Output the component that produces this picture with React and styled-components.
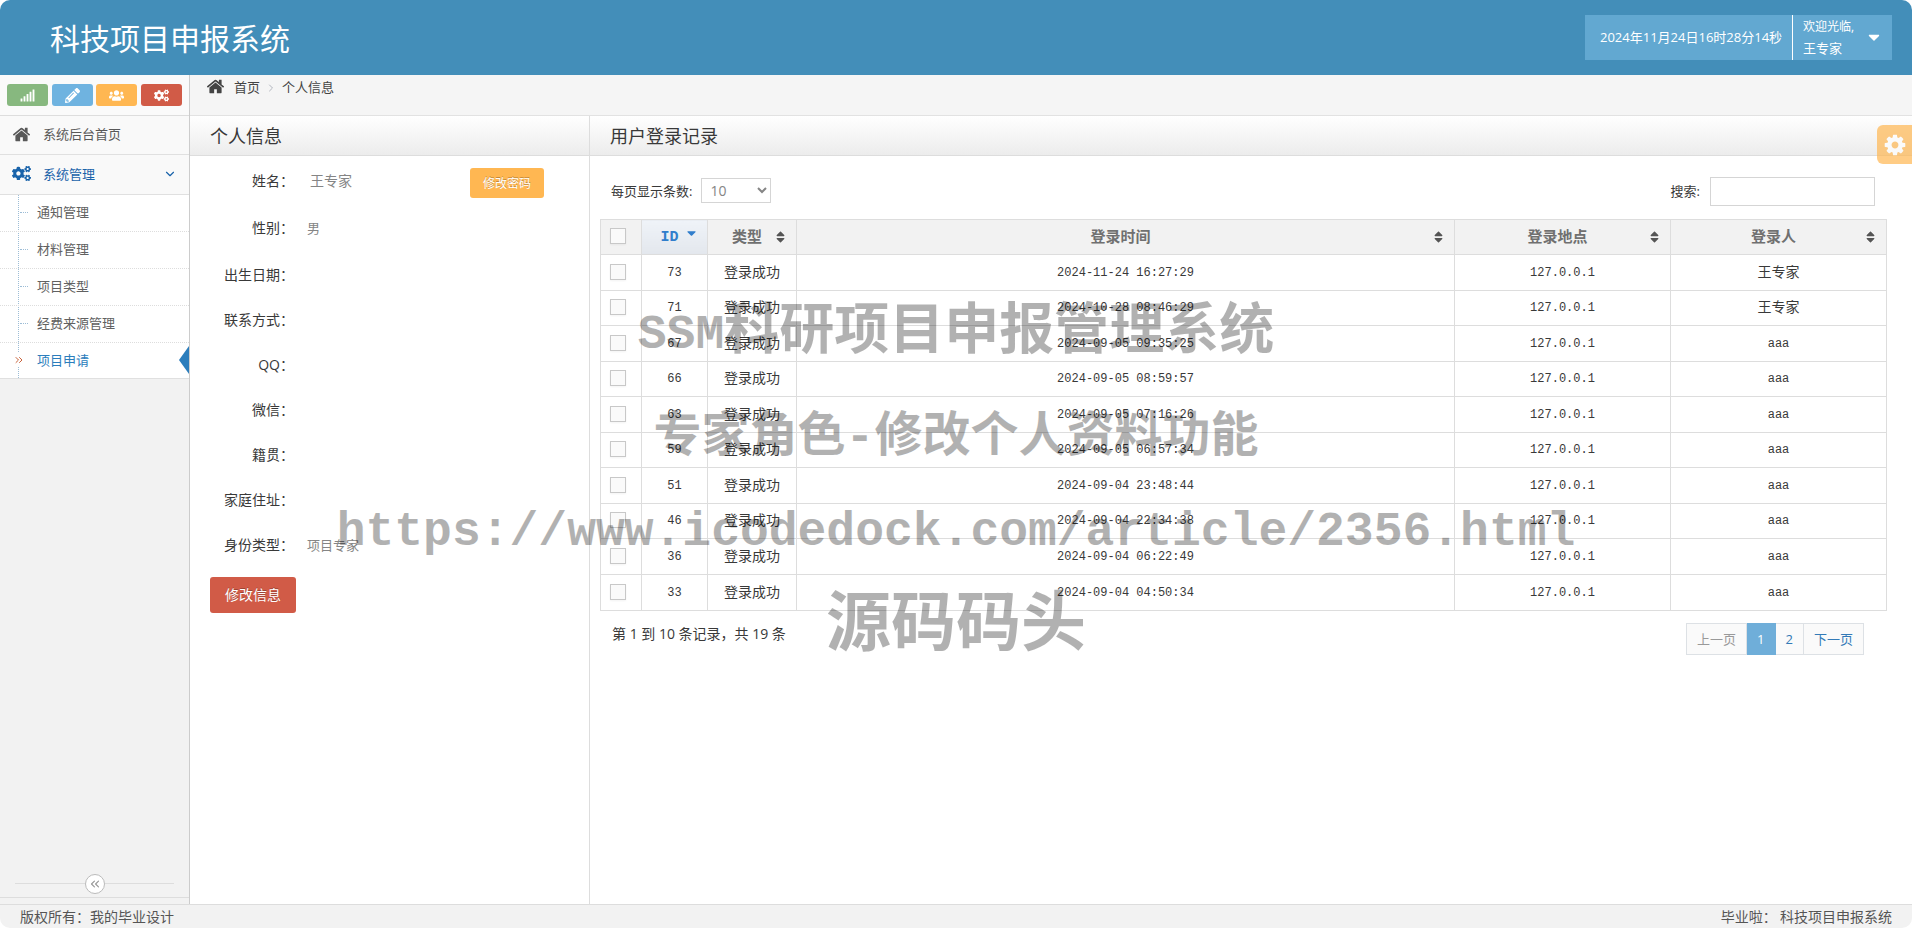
import styled, { createGlobalStyle } from "styled-components";
import { ChevronDown, ChevronRight, ChevronsLeft, ChevronsRight } from "lucide-react";
import { FaSignal, FaPencilAlt, FaUsers, FaCogs, FaCaretDown, FaSort } from "react-icons/fa";

const shortcuts = [
  { color: "#87b87f", icon: <FaSignal />, name: "统计" },
  { color: "#6fb3e0", icon: <FaPencilAlt />, name: "编辑" },
  { color: "#ffb752", icon: <FaUsers />, name: "用户" },
  { color: "#d15b47", icon: <FaCogs />, name: "设置" },
];

const submenu = ["通知管理", "材料管理", "项目类型", "经费来源管理", "项目申请"];

const fields = [
  { label: "姓名", value: "王专家", big: true, gap: true },
  { label: "性别", value: "男", gap: true },
  { label: "出生日期" },
  { label: "联系方式" },
  { label: "QQ" },
  { label: "微信" },
  { label: "籍贯" },
  { label: "家庭住址" },
  { label: "身份类型", value: "项目专家" },
];

const columns = [
  { title: "类型", width: "89px" },
  { title: "登录时间", width: "auto" },
  { title: "登录地点", width: "216px" },
  { title: "登录人", width: "216px" },
];

const records = [
  [73, "2024-11-24 16:27:29", "王专家"],
  [71, "2024-10-28 08:46:29", "王专家"],
  [67, "2024-09-05 09:35:25", "aaa"],
  [66, "2024-09-05 08:59:57", "aaa"],
  [63, "2024-09-05 07:16:26", "aaa"],
  [59, "2024-09-05 06:57:34", "aaa"],
  [51, "2024-09-04 23:48:44", "aaa"],
  [46, "2024-09-04 22:34:38", "aaa"],
  [36, "2024-09-04 06:22:49", "aaa"],
  [33, "2024-09-04 04:50:34", "aaa"],
];

function HomeIcon() {
  return (
    <svg viewBox="0 0 1792 1792" width="1em" height="1em" fill="currentColor" aria-hidden="true">
      <path d="M1472 992v480q0 26-19 45t-45 19h-384v-384h-256v384h-384q-26 0-45-19t-19-45v-480q0-1 .5-3t.5-3l575-474 575 474q1 2 1 6zm223-69l-62 74q-8 9-21 11h-3q-13 0-21-7l-692-577-692 577q-12 8-24 7-13-2-21-11l-62-74q-8-10-7-23.5t11-21.5l719-599q32-26 76-26t76 26l244 204v-195q0-14 9-23t23-9h192q14 0 23 9t9 23v408l219 182q10 8 11 21.5t-7 23.5z" />
    </svg>
  );
}

function GearIcon() {
  return (
    <svg viewBox="0 0 1792 1792" width="1em" height="1em" fill="currentColor" aria-hidden="true">
      <path d="M1152 896q0-106-75-181t-181-75-181 75-75 181 75 181 181 75 181-75 75-181zm512-109v222q0 12-8 23t-20 13l-185 28q-19 54-39 91 35 50 107 138 10 12 10 25t-9 23q-27 37-99 108t-94 71q-12 0-26-9l-138-108q-44 23-91 38-16 136-29 186-7 28-36 28h-222q-14 0-24.5-8.5t-11.5-21.5l-28-184q-49-16-90-37l-141 107q-10 9-25 9-14 0-25-11-126-114-165-168-7-10-7-23 0-12 8-23 15-21 51-66.5t54-70.5q-27-50-41-99l-183-27q-13-2-21-12.5t-8-23.5v-222q0-12 8-23t19-13l186-28q14-46 39-92-40-57-107-138-10-12-10-24 0-10 9-23 26-36 98.5-107.5t94.5-71.5q13 0 26 10l138 107q44-23 91-38 16-136 29-186 7-28 36-28h222q14 0 24.5 8.5t11.5 21.5l28 184q49 16 90 37l142-107q9-9 24-9 13 0 25 10 129 119 165 170 7 8 7 22 0 12-8 23-15 21-51 66.5t-54 70.5q26 50 41 98l183 28q13 2 21 12.5t8 23.5z" />
    </svg>
  );
}

function Sidebar() {
  return (
    <Side>
      <Shortcuts>
        {shortcuts.map((s) => (
          <Shortcut key={s.name} color={s.color} aria-label={s.name}>
            {s.icon}
          </Shortcut>
        ))}
      </Shortcuts>
      <MenuLink href="#home">
        <MenuIcon><HomeIcon /></MenuIcon>
        <span>系统后台首页</span>
      </MenuLink>
      <MenuLink href="#system" $open>
        <MenuIcon><FaCogs /></MenuIcon>
        <span>系统管理</span>
        <ChevronDown />
      </MenuLink>
      <Submenu>
        {submenu.map((name) => {
          const active = name === "项目申请";
          return (
            <SubItem key={name}>
              <SubLink href={"#" + name} $active={active}>
                {active ? <ChevronsRight /> : <Tick />}
                {name}
              </SubLink>
              {active && <ActiveArrow />}
            </SubItem>
          );
        })}
      </Submenu>
      <Collapse>
        <CollapseLine />
        <CollapseButton aria-label="收起">
          <ChevronsLeft size={14} />
        </CollapseButton>
        <CollapseLine />
      </Collapse>
    </Side>
  );
}

function Profile() {
  return (
    <ProfilePanel>
      <PanelTitle>个人信息</PanelTitle>
      <Fields>
        {fields.map((f) => (
          <Field key={f.label} $gap={f.gap}>
            <dt>{f.label}：</dt>
            <FieldValue $big={f.big}>{f.value}</FieldValue>
            {f.big && <PasswordButton>修改密码</PasswordButton>}
          </Field>
        ))}
      </Fields>
      <EditButton>修改信息</EditButton>
    </ProfilePanel>
  );
}

function LoginRecords() {
  return (
    <RecordPanel>
      <PanelTitle>用户登录记录</PanelTitle>
      <Tools>
        <label htmlFor="size">每页显示条数:</label>
        <SizeSelect id="size" defaultValue="10">
          <option>10</option>
          <option>25</option>
          <option>50</option>
        </SizeSelect>
        <SearchLabel htmlFor="search">搜索:</SearchLabel>
        <SearchInput id="search" type="text" />
      </Tools>
      <Table>
        <thead>
          <tr>
            <CheckHead><Checkbox type="checkbox" aria-label="全选" /></CheckHead>
            <Head $width="66px" $sorted>
              <SortButton $sorted>ID<FaCaretDown /></SortButton>
            </Head>
            {columns.map((c) => (
              <Head key={c.title} $width={c.width}>
                <SortButton>{c.title}<FaSort /></SortButton>
              </Head>
            ))}
          </tr>
        </thead>
        <tbody>
          {records.map(([id, time, user]) => (
            <tr key={id}>
              <CheckCell><Checkbox type="checkbox" aria-label={"选择 " + id} /></CheckCell>
              <Cell>{id}</Cell>
              <Cell $cjk>登录成功</Cell>
              <Cell>{time}</Cell>
              <Cell>127.0.0.1</Cell>
              <Cell $cjk={user !== "aaa"}>{user}</Cell>
            </tr>
          ))}
        </tbody>
      </Table>
      <TableFooter>
        <span>第 1 到 10 条记录，共 19 条</span>
        <Pager>
          <PageLink href="#prev" $disabled>上一页</PageLink>
          <PageLink href="#1" $current>1</PageLink>
          <PageLink href="#2">2</PageLink>
          <PageLink href="#next">下一页</PageLink>
        </Pager>
      </TableFooter>
    </RecordPanel>
  );
}

function App() {
  return (
    <>
      <GlobalStyle />
      <Page>
        <Navbar>
          <Brand>科技项目申报系统</Brand>
          <UserArea>
            <Clock>2024年11月24日16时28分14秒</Clock>
            <UserButton>
              <span>
                <small>欢迎光临,</small>
                王专家
              </span>
              <FaCaretDown />
            </UserButton>
          </UserArea>
        </Navbar>
        <Main>
          <Sidebar />
          <Content>
            <Breadcrumb>
              <HomeIcon />
              <a href="#home">首页</a>
              <ChevronRight />
              <span>个人信息</span>
            </Breadcrumb>
            <Panels>
              <Profile />
              <LoginRecords />
            </Panels>
          </Content>
        </Main>
        <Footer>
          <span>版权所有：我的毕业设计</span>
          <span>毕业啦： 科技项目申报系统</span>
        </Footer>
        <SettingsButton aria-label="页面设置">
          <GearIcon />
        </SettingsButton>
        <Watermark>
          <Mark $size={55} $line={104}><MarkLatin>SSM</MarkLatin>科研项目申报管理系统</Mark>
          <Mark $size={48} $line={104}>专家角色-修改个人资料功能</Mark>
          <Mark $size={48} $line={84}>https://www.icodedock.com/article/2356.html</Mark>
          <Mark $size={65} $line={108}>源码码头</Mark>
        </Watermark>
      </Page>
    </>
  );
}

export default App;

const GlobalStyle = createGlobalStyle`
  * {
    box-sizing: border-box;
  }

  body {
    margin: 0;
    background: #fff;
    color: #393939;
    font: 13px/20px "Open Sans", "Noto Sans CJK SC", sans-serif;
  }

  button, input, select {
    font-family: inherit;
  }

  a {
    color: inherit;
    text-decoration: none;
  }
`;

const Page = styled.div`
  position: relative;
  display: flex;
  flex-direction: column;
  min-height: 100vh;
  border-radius: 10px;
  overflow: hidden;
`;

const Navbar = styled.header`
  display: flex;
  justify-content: space-between;
  align-items: center;
  height: 75px;
  padding: 0 20px 0 50px;
  background: #438eb9;
  color: #fff;
`;

const Brand = styled.h1`
  margin: 2px 0 0;
  font-size: 30px;
  line-height: 40px;
  font-weight: 400;
`;

const UserArea = styled.div`
  display: flex;
  height: 45px;
  background: #62a8d1;
`;

const Clock = styled.div`
  width: 208px;
  padding-left: 15px;
  border-right: 1px solid #fff;
  line-height: 45px;
  white-space: nowrap;
`;

const UserButton = styled.button`
  display: flex;
  justify-content: space-between;
  align-items: center;
  width: 99px;
  padding: 0 10px 2px;
  border: 0;
  background: none;
  color: #fff;
  font-size: 13px;
  line-height: 20px;
  text-align: left;

  small {
    display: block;
    font-size: 12px;
    line-height: 22px;
  }

  svg {
    width: 16px;
    height: 18px;
  }
`;

const Main = styled.div`
  display: flex;
  flex: 1;
`;

const Side = styled.nav`
  display: flex;
  flex-direction: column;
  flex: none;
  width: 190px;
  border-right: 1px solid #ccc;
  background: #f2f2f2;
`;

const Shortcuts = styled.div`
  display: flex;
  align-items: center;
  justify-content: space-between;
  height: 41px;
  padding: 0 7px;
  border-bottom: 1px solid #ddd;
  background: #fafafa;
`;

const Shortcut = styled.button`
  display: flex;
  align-items: center;
  justify-content: center;
  width: 41px;
  height: 22px;
  padding: 0;
  border: 0;
  border-radius: 3px;
  background: ${(props) => props.color};
  color: #fff;
  font-size: 15px;
`;

const MenuLink = styled.a`
  display: flex;
  align-items: center;
  height: ${(props) => (props.$open ? "40px" : "39px")};
  padding: 0 12px 2px;
  border-bottom: 1px solid #e0e0e0;
  background: #f9f9f9;
  color: ${(props) => (props.$open ? "#1963aa" : "#585858")};

  > svg {
    width: 14px;
    margin-left: auto;
  }
`;

const MenuIcon = styled.span`
  display: flex;
  width: 31px;
  font-size: 19px;
`;

const Submenu = styled.ul`
  position: relative;
  margin: 0;
  padding: 0;
  list-style: none;
  border-bottom: 1px solid #e0e0e0;
  background: #fff;

  &::before {
    content: "";
    position: absolute;
    top: 0;
    bottom: 0;
    left: 18px;
    border-left: 1px dotted #9dbdd6;
  }
`;

const SubItem = styled.li`
  position: relative;
  height: 37px;
  border-bottom: 1px dotted #ddd;

  &:last-child {
    height: 35px;
    border-bottom: 0;
  }
`;

const SubLink = styled.a`
  display: flex;
  align-items: center;
  height: 34px;
  padding-left: 13px;
  color: ${(props) => (props.$active ? "#2b7dbc" : "#616161")};

  svg {
    width: 12px;
    height: 14px;
    margin-right: 12px;
    background: #fff;
    color: #c86139;
    z-index: 1;
  }
`;

const Tick = styled.i`
  width: 8px;
  margin: 0 9px 0 7px;
  border-top: 1px dotted #9dbdd6;
`;

const ActiveArrow = styled.i`
  position: absolute;
  top: 3px;
  right: 0;
  border: 14px solid transparent;
  border-left: 0;
  border-right: 10px solid #2b7dbc;
`;

const Collapse = styled.div`
  display: flex;
  align-items: center;
  height: 28px;
  margin: auto 0 6px;
  padding: 0 15px;
  border-bottom: 1px solid #ddd;
`;

const CollapseLine = styled.i`
  flex: 1;
  height: 1px;
  background: #ddd;
`;

const CollapseButton = styled.button`
  display: flex;
  align-items: center;
  justify-content: center;
  width: 20px;
  height: 20px;
  padding: 0;
  border: 1px solid #bbb;
  border-radius: 50%;
  background: #fff;
  color: #999;
`;

const Content = styled.main`
  display: flex;
  flex-direction: column;
  flex: 1;
  min-width: 0;
`;

const Breadcrumb = styled.div`
  display: flex;
  align-items: flex-start;
  height: 41px;
  padding: 2px 16px;
  border-bottom: 1px solid #e2e2e2;
  background: #f5f5f5;
  color: #444;

  svg:first-child {
    margin-right: 9px;
    font-size: 19px;
  }

  svg:nth-child(3) {
    width: 12px;
    height: 22px;
    margin: 0 5px;
    color: #b2b6bf;
  }
`;

const Panels = styled.div`
  display: flex;
  flex: 1;
`;

const ProfilePanel = styled.section`
  flex: none;
  width: 400px;
  border-right: 1px solid #ddd;
`;

const RecordPanel = styled.section`
  flex: 1;
  min-width: 0;
`;

const PanelTitle = styled.h2`
  height: 40px;
  margin: 0;
  padding-left: 20px;
  border-bottom: 1px solid #ddd;
  background: linear-gradient(#fff, #ececec);
  font-size: 18px;
  line-height: 40px;
  font-weight: 400;
`;

const Fields = styled.dl`
  margin: 0;
  padding: 3px 0 9px;
`;

const Field = styled.div`
  display: flex;
  align-items: center;
  height: 45px;
  padding-bottom: 2px;
  margin-bottom: ${(props) => (props.$gap ? "2px" : "0")};

  dt {
    width: 104px;
    font-size: 14px;
    text-align: right;
  }
`;

const FieldValue = styled.dd`
  margin: 0;
  padding-left: ${(props) => (props.$big ? "16px" : "13px")};
  color: #858585;
  font-size: ${(props) => (props.$big ? "14px" : "13px")};
`;

const Button = styled.button`
  border: 0;
  border-radius: 3px;
  color: #fff;
  text-shadow: 0 -1px 0 rgba(0, 0, 0, 0.25);
`;

const PasswordButton = styled(Button)`
  width: 74px;
  height: 30px;
  margin: 4px 45px 0 auto;
  padding: 0;
  background: #ffb752;
  font-size: 12px;
`;

const EditButton = styled(Button)`
  width: 86px;
  height: 36px;
  margin-left: 20px;
  padding: 0 0 2px;
  background: #d15b47;
  font-size: 14px;
`;

const Tools = styled.div`
  display: flex;
  align-items: center;
  height: 63px;
  padding: 6px 37px 0 21px;
`;

const SizeSelect = styled.select`
  width: 70px;
  height: 25px;
  margin-left: 9px;
  padding: 0 4px;
  border: 1px solid #d5d5d5;
  background: #fff;
  color: #858585;
  font-size: 14px;
`;

const SearchLabel = styled.label`
  margin-left: auto;
`;

const SearchInput = styled.input`
  width: 165px;
  height: 29px;
  margin: 2px 0 0 10px;
  padding: 4px;
  border: 1px solid #d5d5d5;
`;

const Table = styled.table`
  width: calc(100% - 35px);
  margin-left: 10px;
  border-collapse: collapse;
  table-layout: fixed;

  th, td {
    height: 36px;
    padding: 0;
    border: 1px solid #ddd;
  }

  th {
    height: 35px;
  }

  tbody tr:nth-child(even):not(:last-child) td {
    height: 35px;
  }
`;

const Head = styled.th`
  width: ${(props) => props.$width};
  background: ${(props) => (props.$sorted ? "linear-gradient(#eff3f8, #e3e7ed)" : "#f2f2f2")};
  color: ${(props) => (props.$sorted ? "#307ecc" : "#707070")};
`;

const CheckHead = styled.th`
  width: 41px;
  background: #f2f2f2;
  text-align: left;
`;

const CheckCell = styled.td`
  text-align: left;
`;

const SortButton = styled.button`
  position: relative;
  display: block;
  width: 100%;
  height: 32px;
  padding: ${(props) => (props.$sorted ? "0 10px 0 0" : "0 10px 2px 0")};
  border: 0;
  background: none;
  color: inherit;
  font-family: "Liberation Mono", "Noto Sans CJK SC", monospace;
  font-size: 15px;
  font-weight: 700;

  svg {
    position: absolute;
    top: ${(props) => (props.$sorted ? "5px" : "9px")};
    right: 11px;
    width: 9px;
    height: 14px;
    color: ${(props) => (props.$sorted ? "#307ecc" : "#555")};
  }
`;

const Checkbox = styled.input`
  display: block;
  appearance: none;
  width: 16px;
  height: 16px;
  margin: 0 0 2px 9px;
  border: 1px solid #c8c8c8;
  background: #fafafa;
  box-shadow: 0 1px 2px rgba(0, 0, 0, 0.05);
`;

const Cell = styled.td`
  font-family: "Liberation Mono", "Noto Sans CJK SC", monospace;
  font-size: ${(props) => (props.$cjk ? "14px" : "12px")};
  text-align: center;
`;

const TableFooter = styled.div`
  display: flex;
  justify-content: space-between;
  align-items: flex-start;
  padding: 12px 48px 0 22px;
  font-size: 14px;
  line-height: 22px;
`;

const Pager = styled.nav`
  display: flex;
  font-size: 13px;
`;

const PageLink = styled.a`
  height: 32px;
  padding: 0 10px;
  border: 1px solid ${(props) => (props.$current ? "#6faed9" : "#dde1e5")};
  border-left-width: ${(props) => (props.$disabled ? "1px" : "0")};
  background: ${(props) => (props.$current ? "#6faed9" : "#fafafa")};
  color: ${(props) => (props.$current ? "#fff" : props.$disabled ? "#999" : "#337ab7")};
  line-height: 30px;
`;

const Footer = styled.footer`
  display: flex;
  justify-content: space-between;
  height: 24px;
  padding: 0 20px;
  border-top: 1px solid #ddd;
  background: #f2f2f2;
  color: #555;
  font-family: "Noto Sans CJK SC", sans-serif;
  font-size: 14px;
  line-height: 22px;
`;

const SettingsButton = styled.button`
  position: absolute;
  top: 125px;
  right: 0;
  display: flex;
  align-items: center;
  justify-content: center;
  width: 35px;
  height: 39px;
  padding: 0;
  border: 0;
  border-radius: 6px 0 0 6px;
  background: #ffb752;
  color: #fff;
  font-size: 24px;
  opacity: 0.7;
`;

const Watermark = styled.div`
  position: absolute;
  top: 282px;
  left: 0;
  right: 0;
  color: #000;
  font-family: "Liberation Mono", "Noto Sans CJK SC", monospace;
  font-weight: 700;
  text-align: center;
  opacity: 0.3;
  pointer-events: none;
`;

const Mark = styled.div`
  height: ${(props) => props.$line}px;
  font-size: ${(props) => props.$size}px;
  line-height: ${(props) => props.$line}px;
  white-space: nowrap;
`;

const MarkLatin = styled.span`
  font-size: 48px;
`;
